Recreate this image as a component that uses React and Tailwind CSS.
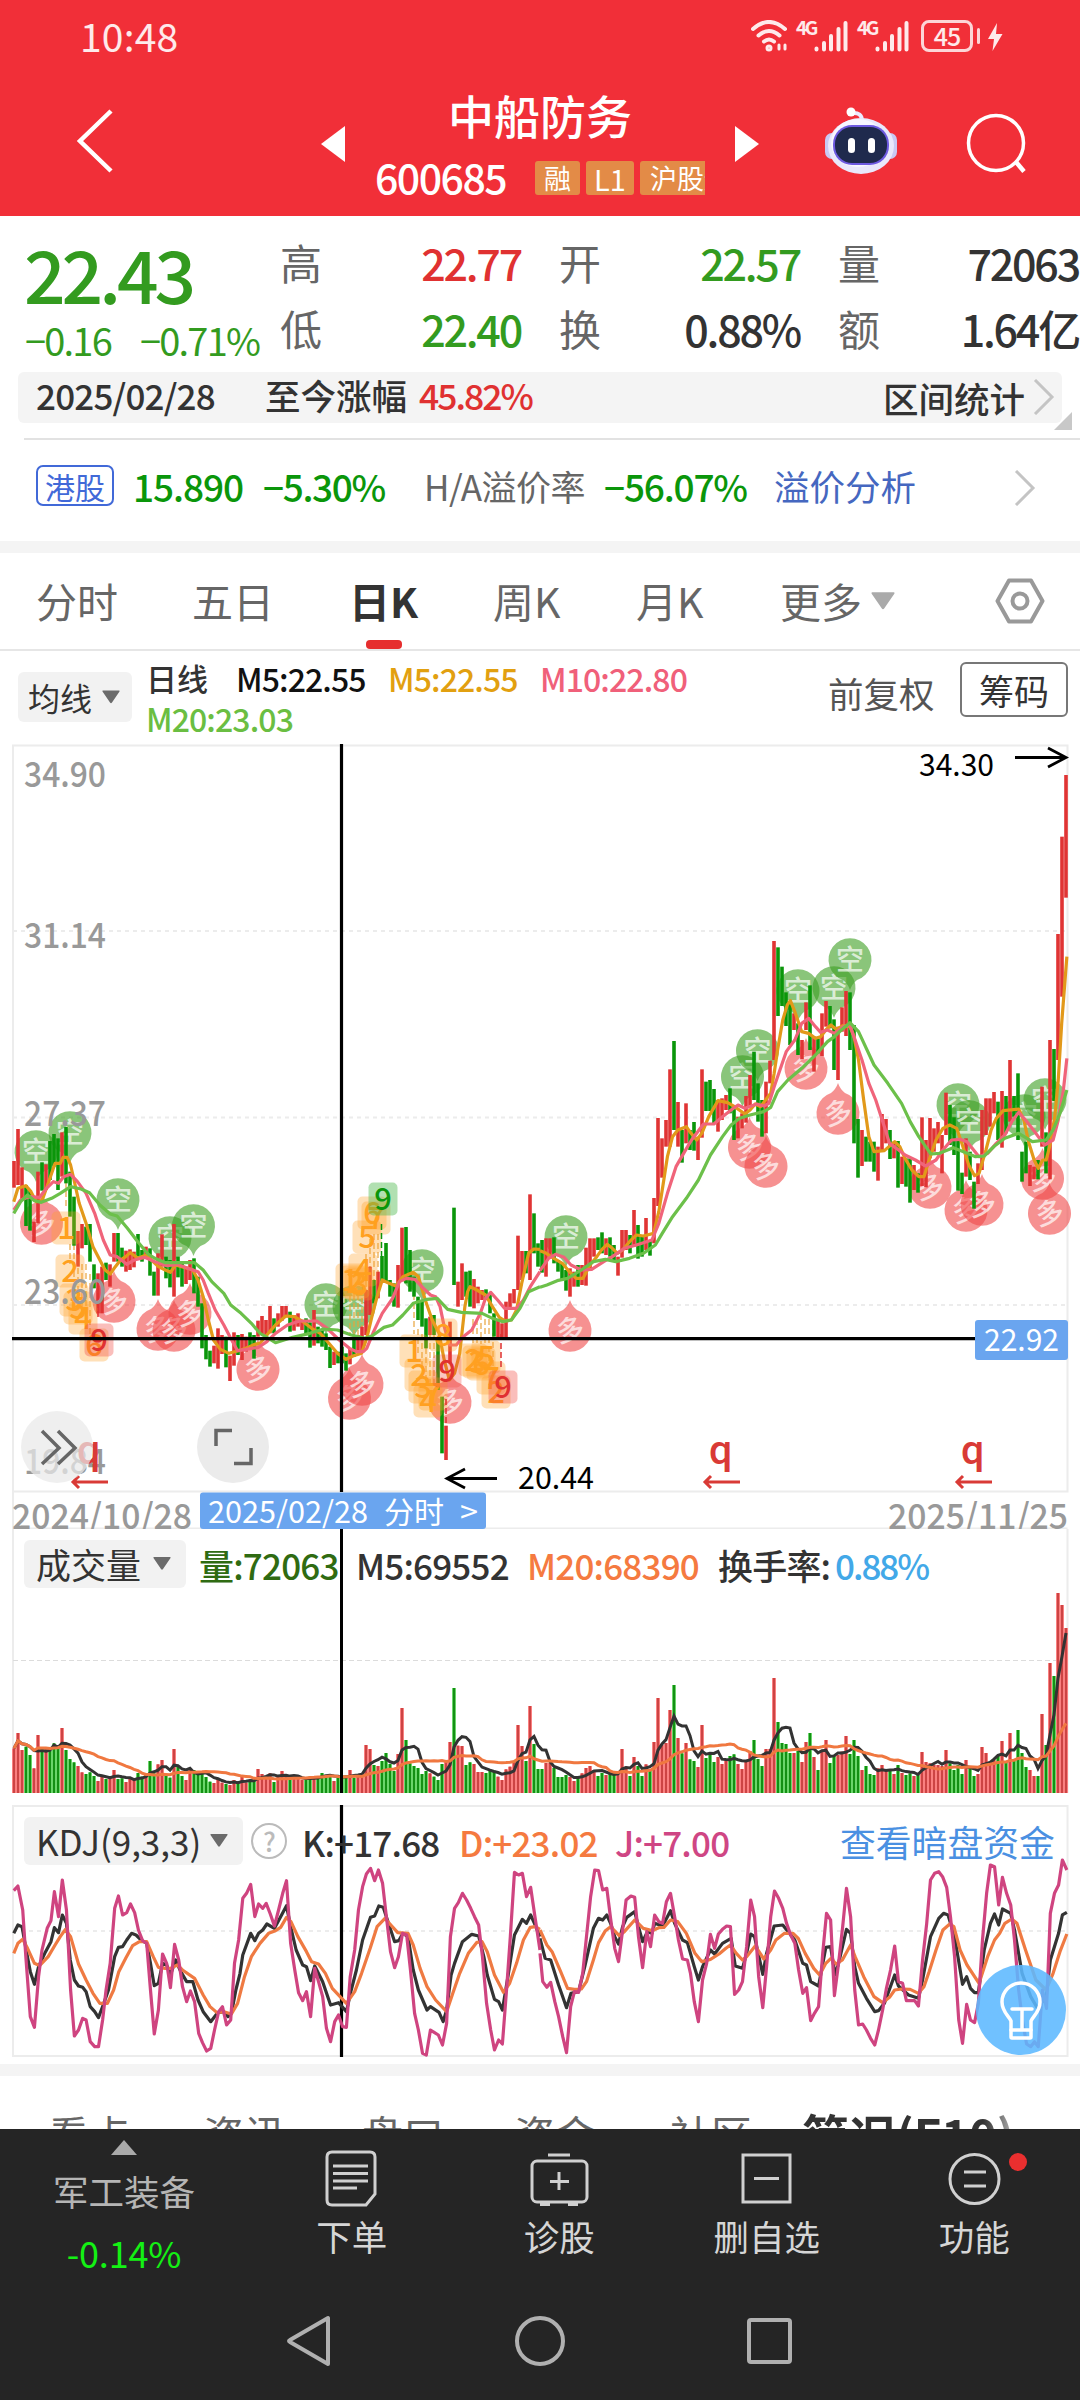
import React from "react";

const FONT = "font-['Noto_Sans_CJK_SC','Noto_Sans',sans-serif]";

const RED = "#e03434";
const GREEN = "#0a960a";

// direction, high and low of every daily bar, in chart units
const candles = `
r243,323 r147,315 r262,360 g315,438 g330,452 r425,486 r275,430 g247,332 r253,330 g183,300
g162,260 g175,330 r157,290 g141,310 g275,410 g350,497 r453,560 r432,505 g440,495 g432,545
g553,625 r580,700 r560,700 g548,600 r553,620 r459,545 g459,545 g503,560 r512,575 r508,570
r515,562 g462,530 g510,545 r500,535 g505,587 g575,647 r520,647 r463,560 g530,595 g540,622
r432,650 g530,592 g545,620 r560,612 r540,600 g535,640 g590,680 g670,805 g765,838 g812,860
r797,850 r745,866 r765,822 g770,862 r827,903 r757,857 g765,825 r762,840 r770,815 g757,800
g765,836 r722,770 r708,762 r720,770 r678,760 g715,760 r700,740 r678,722 r678,712 g695,755
r705,752 r700,740 r720,750 g715,765 g727,803 r690,797 g740,790 g750,800 g760,810 g800,864
r815,855 g815,850 g800,850 g820,872 r805,853 g780,830 r765,820 r740,810 r630,765 r560,705
g600,670 r575,655 g528,605 g489,605 g600,650 g610,680 r555,683 r443,600 g441,610 g510,635
g590,650 g650,720 g660,740 g715,805 r710,765 g705,765 g780,930 g950,1120 r1037,1140 r725,850
g383,615 r605,680 r550,660 g575,650 g572,680 r597,685 r620,670 r630,660 g628,660 g640,700
g700,770 r720,775 r730,780 r665,780 r640,690 r627,670 r467,630 r513,600 g513,580 r343,600
g400,520 g490,560 g480,578 r475,590 r475,530 g472,550 g540,575 g550,597 g570,632 r565,650
r575,620 g555,620 r555,615 r503,617 r475,570 r475,530 g472,510 g457,520 r475,525 g472,530
g495,540 r530,587 r450,533 r450,510 g465,520 r390,500 g435,536 g470,530 r414,510 g480,527
r354,490 r114,378 r175,293 r120,200 r-32,200 g-117,150 r66,200 g150,248 r70,190 g150,210
g126,212 r170,240 r-32,173 g5,93 g0,93 g27,130 r60,155 r55,120 r45,90 g25,100
g80,180 r110,175 r100,145 r48,128 r-15,80 g-85,60 g10,125 g60,170 r5,160 r-58,10
r-417,-60 g-398,-192 g-340,-222 g-263,-162 g-230,-105 r-200,-150 g-170,-75 r-120,-62 r-233,-150 g-284,-90
r-130,-25 g-125,-80 r-200,-72 r-237,-160 g-222,-155 g-182,-30 r-160,0 r-218,-145 r-267,-132 g-263,-90
g-165,190 g117,293 r150,258 g170,245 g185,245 g185,275 r200,302 r102,210 r117,190 g150,237
r185,235 g183,323 r230,312 g235,320 g235,368 r255,330 g280,338 r112,318 r180,322 r114,235
r145,215 r126,190 r165,280 r38,165 g75,195 g112,225 g180,332 g278,342 r175,290 g215,300
g305,386 r250,312 r90,270 r55,165 r55,140 r36,100 g65,180 r33,203 g48,160 r-60,125
g48,110 g-20,180 g215,305 g185,280 r255,318 r260,298 g240,298 r20,200 g157,280 r-120,298
g-93,63 r-438,-60 r-730,-250 r-915,-547`
  .trim()
  .split(/\s+/)
  .map((item) => {
    const [high, low] = item.slice(1).split(",").map(Number);
    return { up: item[0] === "r", high, low };
  });

const volumes = `
805 759 810 800 825 865 765 803 808 812 790 795 744 810 837 847 858 877 882 877 888 903 885 897 893 870
897 895 906 897 900 879 890 885 843 880 853 840 885 893 807 860 888 900 870 870 880 880 891 905 909 895
908 912 915 900 905 891 908 905 903 867 882 888 880 906 885 873 885 893 895 893 900 898 890 893 890 879
885 883 903 893 890 887 870 893 885 880 795 807 855 858 843 819 852 873 822 684 780 850 858 864 882 873
880 890 900 852 845 786 624 797 798 855 847 852 876 876 879 870 872 890 900 868 860 845 735 798 843 678
792 867 867 849 849 864 891 891 885 891 903 893 880 864 858 870 888 879 885 880 885 880 807 860 888 831
858 888 853 870 786 654 795 789 690 615 774 820 789 838 843 861 735 834 825 846 831 852 840 828 823 852
867 843 813 780 837 858 807 807 594 726 789 792 819 819 813 846 786 759 831 870 815 780 849 825 825 815
768 822 780 828 870 858 882 885 865 855 870 873 882 855 879 885 880 888 885 816 846 850 855 855 858 810
850 870 855 882 840 865 888 882 801 819 845 840 825 783 845 759 840 750 819 861 870 888 888 702 795 549
588 339 375 444`
  .trim()
  .split(/\s+/)
  .map(Number);

const barX = (i) => 14 + i * 4;

const average = (values, size) =>
  values
    .map((_, i) => {
      const part = values.slice(Math.max(0, i - size + 1), i + 1);
      const mean = part.reduce((a, b) => a + b, 0) / part.length;
      return `${barX(i)},${(mean / 3 - 49).toFixed(1)}`;
    })
    .join(" ");

// every line is stored as a left and a right half
const priceLines = [
  {
    color: "#e2991a",
    left: "40,365 52,325 75,317 90,335 105,365 122,362 140,310 160,250 175,250 183,232 195,232 205,255 215,300 230,370 250,430 270,500 290,540 305,570 320,582 335,560 350,540 365,530 378,518 392,528 400,535 425,525 440,540 460,560 480,570 495,577 510,555 535,562 560,570 575,600 590,650 605,720 620,780 640,808 665,820 700,810 725,800 740,793 755,790 775,765 800,735 830,708 855,710 880,725 905,745 930,760 955,790 980,820 1005,838 1025,828 1050,820 1065,775 1080,710 1095,650 1110,600 1130,610 1150,618 1170,590 1200,577 1215,590 1235,660 1255,720 1275,760 1290,840 1305,900 1320,880 1335,820 1350,680 1358,635 1365,620 1385,630 1410,645 1430,680 1450,712 1465,722 1485,720 1500,690 1515,610 1535,520 1550,507 1568,508",
    right: "0,512 15,518 40,535 65,550 85,575 105,595 125,595 145,555 165,530 180,508 195,493 210,505 225,520 240,510 260,485 280,465 300,468 330,460 345,395 355,330 370,230 385,170 400,150 425,140 435,155 455,180 470,160 490,110 517,62 545,68 565,80 595,102 610,90 625,72 640,80 655,60 670,40 680,-20 690,-90 705,-180 718,-225 727,-238 740,-205 760,-145 780,-140 800,-125 815,-130 830,-150 845,-165 860,-152 880,-163 900,-160 912,-130 925,-60 940,60 955,170 970,215 1000,212 1030,185 1045,200 1060,235 1080,270 1100,290 1115,290 1130,240 1150,180 1170,145 1190,135 1210,145 1225,190 1245,255 1262,287 1275,280 1295,210 1310,150 1325,115 1345,92 1390,87 1405,120 1420,190 1435,240 1447,265 1460,240 1470,240 1480,200 1495,110 1505,0 1515,-170 1530,-370",
  },
  {
    color: "#f0647a",
    left: "40,390 60,360 85,350 115,352 135,325 155,305 170,310 185,290 205,283 225,305 250,340 275,400 300,480 320,525 340,530 368,553 390,540 420,532 450,545 485,557 515,553 545,565 575,575 590,600 605,640 625,690 650,735 670,775 690,812 715,808 750,802 775,785 800,760 835,735 870,723 920,723 950,745 985,780 1015,805 1035,815 1055,815 1065,805 1085,755 1110,700 1140,655 1160,605 1180,595 1205,598 1230,625 1250,645 1265,650 1278,680 1290,740 1305,795 1325,795 1345,770 1370,750 1395,700 1410,655 1425,637 1445,660 1465,685 1500,685 1520,660 1540,620 1568,575",
    right: "0,572 25,535 45,523 70,532 90,555 120,570 150,568 185,545 210,530 245,505 280,495 325,480 345,430 370,340 395,260 420,215 440,180 475,132 505,132 530,110 555,90 575,75 595,85 630,72 650,78 665,70 680,20 700,-40 715,-85 740,-120 760,-170 780,-185 800,-160 815,-143 835,-150 855,-140 880,-160 900,-165 915,-120 935,-60 955,10 975,60 1000,140 1015,190 1035,205 1060,225 1090,240 1120,258 1150,240 1170,210 1195,180 1220,178 1240,185 1275,230 1300,220 1325,190 1350,165 1370,125 1390,97 1410,120 1440,160 1465,195 1490,180 1505,120 1520,30 1530,-65",
  },
  {
    color: "#6cc04a",
    left: "40,400 60,365 80,345 100,362 120,367 150,355 175,340 205,320 235,327 260,338 290,375 320,402 340,408 370,445 400,485 430,522 450,535 480,548 520,548 565,548 590,570 615,605 650,640 670,675 700,700 730,730 755,760 780,775 800,788 825,780 850,772 900,760 940,747 980,750 1020,765 1060,775 1080,768 1115,742 1140,735 1170,705 1200,670 1240,658 1270,655 1300,688 1340,697 1400,700 1430,715 1460,725 1485,720 1510,685 1535,635 1568,620",
    right: "0,622 20,615 50,602 80,595 120,570 155,545 190,538 220,545 260,535 300,520 335,495 355,460 385,410 425,355 460,300 495,225 530,170 555,135 580,115 610,105 650,95 670,82 690,35 720,0 760,-35 800,-75 835,-115 855,-130 875,-150 900,-172 925,-145 970,-45 1010,10 1050,70 1075,125 1100,170 1120,200 1135,222 1160,220 1200,203 1230,215 1265,230 1290,228 1320,198 1350,175 1390,160 1430,185 1470,180 1490,150 1510,100 1530,30",
  },
];

const kdjLines = [
  {
    color: "#333333",
    left: "40,430 52,405 64,410 76,480 88,545 100,583 112,530 130,490 148,455 158,413 170,428 181,375 193,400 204,510 216,570 228,588 240,592 250,605 262,650 275,665 286,683 298,650 315,600 333,500 344,472 356,470 368,450 382,430 395,435 410,450 426,460 437,520 448,587 460,580 472,520 484,525 495,555 510,510 525,545 542,575 560,575 575,630 590,665 612,695 632,668 650,665 662,680 672,670 685,600 697,550 705,495 728,430 740,452 751,430 763,420 775,402 797,415 810,390 832,347 844,410 860,480 879,525 890,530 902,572 914,528 937,575 960,645 983,638 1006,665 1020,600 1035,540 1053,450 1076,382 1088,378 1100,348 1113,352 1125,390 1146,455 1158,452 1170,430 1185,440 1200,540 1215,600 1240,660 1250,650 1275,667 1287,695 1297,660 1310,555 1320,520 1343,455 1370,433 1390,438 1405,500 1415,555 1436,628 1448,635 1459,660 1475,560 1494,435 1517,388 1529,400 1541,375 1552,400 1568,440",
    right: "0,445 15,505 31,510 54,585 66,620 77,653 90,610 112,605 130,530 155,415 170,385 182,390 194,375 205,400 217,440 228,462 240,410 252,382 275,365 286,410 298,455 312,425 325,430 333,400 356,408 379,362 391,400 414,450 428,458 448,530 460,570 472,530 495,480 507,492 530,460 555,445 567,528 588,535 600,490 612,432 623,440 647,553 658,490 680,408 705,405 728,435 740,450 763,520 774,525 786,575 809,588 830,472 844,470 857,555 867,520 890,418 902,430 914,530 925,580 948,625 972,665 983,662 1000,640 1030,555 1041,588 1070,615 1099,625 1111,570 1134,440 1158,385 1172,370 1185,375 1204,440 1227,583 1239,560 1250,595 1262,608 1273,608 1290,480 1308,400 1320,372 1332,405 1343,357 1367,370 1378,420 1400,550 1425,620 1445,655 1470,620 1482,510 1506,430 1517,375 1530,367",
  },
  {
    color: "#ef7a42",
    left: "40,490 52,460 66,448 80,475 100,520 115,527 140,500 160,465 175,440 190,418 205,440 228,522 250,570 270,610 290,640 312,640 330,600 345,545 365,505 385,467 405,455 426,455 445,500 460,532 480,535 495,535 515,525 530,540 565,565 590,615 610,650 630,668 650,665 672,672 690,640 710,560 730,500 755,460 780,430 800,422 815,412 832,382 845,395 865,440 890,485 905,515 925,522 945,550 965,595 1006,640 1030,605 1050,550 1075,475 1095,410 1118,385 1135,405 1155,428 1185,430 1200,465 1220,535 1240,590 1265,630 1297,665 1315,610 1335,550 1360,490 1385,457 1400,455 1415,485 1436,555 1462,607 1480,580 1500,520 1520,450 1540,412 1555,410 1568,418",
    right: "0,420 20,465 35,485 60,545 80,595 100,598 120,597 135,575 155,510 170,458 190,422 205,410 230,437 245,425 275,390 300,415 325,422 345,413 360,412 379,390 400,395 425,430 450,490 470,515 495,508 520,492 540,475 553,465 570,490 588,510 600,500 625,468 650,507 670,480 685,450 710,430 735,430 750,445 770,490 795,535 812,555 830,520 845,505 860,522 878,510 902,465 915,500 940,560 970,620 995,638 1015,622 1030,600 1050,597 1075,598 1099,610 1115,590 1130,545 1150,480 1170,420 1190,402 1202,410 1220,480 1240,525 1275,580 1300,500 1320,450 1335,430 1350,400 1370,387 1385,400 1410,480 1440,570 1470,600 1490,550 1510,485 1530,432",
  },
  {
    color: "#cf4480",
    left: "40,302 52,288 66,360 75,500 88,680 100,712 112,560 122,480 137,415 148,392 158,305 170,380 181,270 193,360 205,600 216,738 228,720 240,685 250,690 262,755 275,770 286,770 298,690 308,600 320,520 333,355 344,318 356,375 368,368 379,342 391,368 402,420 414,452 426,460 437,600 448,732 460,660 472,492 484,520 495,593 507,463 519,510 530,590 542,635 553,603 565,635 577,730 588,758 600,783 612,775 623,720 635,665 646,650 658,705 670,690 681,520 693,450 705,325 716,310 728,283 740,380 751,342 763,355 773,340 785,372 797,408 809,360 821,310 832,272 844,460 856,540 867,608 879,632 890,605 902,680 914,535 925,575 937,620 948,715 960,755 972,695 983,675 995,710 1006,712 1017,560 1030,480 1041,360 1053,290 1064,252 1076,235 1088,272 1099,240 1111,280 1122,380 1134,485 1146,533 1157,500 1169,430 1181,435 1192,540 1204,670 1215,720 1227,790 1238,795 1250,720 1262,728 1273,735 1285,765 1297,700 1308,440 1320,355 1331,338 1343,310 1355,330 1367,355 1378,380 1390,405 1401,500 1413,640 1425,720 1436,780 1448,750 1459,762 1471,600 1482,440 1494,247 1506,255 1517,250 1529,320 1541,292 1552,370 1568,480",
    right: "0,490 8,575 20,592 31,577 43,635 54,680 66,740 77,788 89,650 100,605 112,607 124,550 135,440 147,320 159,240 170,242 182,300 194,295 205,385 217,475 228,515 240,420 250,330 264,318 275,322 286,440 298,533 310,425 321,470 333,375 345,395 356,400 367,335 379,310 391,380 402,450 414,507 428,510 437,550 448,635 460,695 472,570 484,520 495,433 507,475 518,432 530,418 542,408 553,410 565,613 577,600 588,575 600,470 612,330 623,380 635,560 647,653 658,530 670,380 681,303 693,325 705,355 716,400 728,435 740,460 751,540 763,610 774,593 786,692 797,670 809,650 821,490 832,370 844,390 855,617 867,520 879,410 890,295 902,380 914,600 925,705 937,702 948,720 960,745 972,765 983,720 995,660 1006,595 1018,540 1030,468 1041,575 1053,580 1064,632 1088,632 1099,648 1111,510 1123,400 1134,270 1146,250 1158,245 1169,260 1181,292 1192,380 1204,500 1216,690 1227,760 1239,643 1250,690 1262,698 1273,640 1285,450 1297,310 1308,225 1320,230 1332,345 1343,262 1355,310 1367,345 1378,450 1390,600 1401,690 1413,762 1425,770 1436,755 1447,770 1459,600 1471,655 1482,370 1494,310 1506,285 1517,210 1530,240",
  },
];

const shortPins = [
  [36, 408], [70, 389], [118, 456], [170, 494], [193.5, 482], [326, 561], [354, 563], [422, 527],
  [566, 493], [742.5, 333], [757.5, 307], [798, 247], [834, 244], [850, 216], [958, 361], [969, 378], [1024, 372], [1045, 356],
];

const longPins = [
  [41.5, 479], [114, 557], [158, 585], [174, 586], [190, 569], [258, 625], [349.5, 654], [362, 640], [450, 658],
  [570, 586], [749.5, 403], [766, 422], [806, 324], [838, 369], [930, 443], [966, 466], [982, 460], [1042.5, 434], [1049.5, 469],
];

// nine-turn counters: x, y, digit
const counters = [
  [66, 484, "1"], [70, 527, "2"], [74, 556, "3"], [78, 564, "5"], [83, 574, "4"], [94, 601, "6"],
  [350, 536, "1"], [355, 538, "2"], [359, 540, "3"], [363, 526, "4"], [367, 493, "5"], [372, 469, "6"], [376, 474, "7"],
  [414, 607, "1"], [419, 631, "2"], [423, 643, "3"], [428, 657, "4"], [433, 650, "7"], [443, 591, "8"],
  [473, 616, "2"], [477, 618, "3"], [481, 620, "6"], [486, 613, "5"], [491, 634, "7"], [496, 648, "2"],
];

const HalfLines = ({ lines, offset, width }) =>
  lines.map(({ color, left, right }) => (
    <g key={color} fill="none" stroke={color} strokeWidth={width} strokeLinejoin="round">
      <polyline
        points={left}
        transform={`translate(0 ${offset}) scale(0.34435 0.33333)`}
        vectorEffect="non-scaling-stroke"
      />
      <polyline
        points={right}
        transform={`translate(540 ${offset}) scale(0.34435 0.33333)`}
        vectorEffect="non-scaling-stroke"
      />
    </g>
  ));

const Label = ({ x, y, w, size, fill, weight = 400, children }) => (
  <text x={x} y={y} textLength={w} lengthAdjust="spacingAndGlyphs" fontSize={size} fontWeight={weight} fill={fill}>
    {children}
  </text>
);

const Chevron = ({ className }) => (
  <svg viewBox="0 0 22 36" className={className} fill="none" stroke="#c4c4c4" strokeWidth="3">
    <path d="M2 1 L19 18 L2 35" />
  </svg>
);

const Caret = ({ className, fill = "#6b6b6b" }) => (
  <svg viewBox="0 0 18 13" className={className}>
    <path d="M1 0 H17 Q18 0 17.5 1 L10 12 Q9 13.5 8 12 L.5 1 Q0 0 1 0Z" fill={fill} />
  </svg>
);

const Signal = () => (
  <div className="flex h-8">
    <span className="w-[18px] text-[19px] leading-[14px] font-bold tracking-[-2.5px]">4G</span>
    <svg viewBox="0 0 34 32" className="h-8 w-[34px]" stroke="#fff" strokeOpacity=".9" strokeWidth="4" strokeLinecap="round">
      <path d="M2.500 28.500V29.500M10 23V29.500M17 16V29.500M24.500 9V29.500M31.500 3V29.500" />
    </svg>
  </div>
);

const StatusBar = () => (
  <div className="flex h-[72px] items-start text-white/90">
    <span className="mt-[9px] ml-[80px] w-[671px] text-[39px] leading-[52px] tracking-[0.2px]">10:48</span>
    <svg viewBox="0 0 38 32" className="mt-5 h-8 w-[38px]" fill="none" stroke="currentColor" strokeWidth="4" strokeLinecap="round">
      <path d="M2 9 Q18 -5 34 9M7.500 15.500 Q18 6.500 28.500 15.500M13 21.500 Q18 17.500 23 21.500" />
      <circle cx="18" cy="28" r="1.500" />
      <path d="M28 25 V29 M34 25 V29" strokeWidth="3" />
    </svg>
    <div className="mt-5 ml-[7px] flex gap-[9px]">
      <Signal />
      <Signal />
    </div>
    <div className="mt-5 ml-3 flex h-8 w-[52px] items-center justify-center rounded-[8px] border-[3px] border-white/80 pb-px text-[25px] leading-none font-medium tracking-[-1px]">
      45
    </div>
    <div className="mt-7 ml-1 h-4 w-[3px] rounded bg-white/80" />
    <svg viewBox="0 0 16 28" className="mt-[23px] ml-[7px] h-7 w-4" fill="currentColor">
      <path d="M10 0 L1 16 H7 L5.500 28 L15.500 11 H9Z" />
    </svg>
  </div>
);

const Robot = () => (
  <svg viewBox="0 0 74 68" className="mt-[35px] ml-[65px] h-[68px] w-[74px]">
    <path d="M38 14 Q38 5 28 6" stroke="#eceaff" strokeWidth="4" fill="none" />
    <circle cx="27" cy="5" r="4.500" fill="#fff" />
    <rect x="1" y="26" width="14" height="26" rx="7" fill="#c9c9f3" />
    <rect x="59" y="26" width="14" height="26" rx="7" fill="#c9c9f3" />
    <ellipse cx="37" cy="39" rx="33" ry="28" fill="#e9e8fb" />
    <ellipse cx="34" cy="36" rx="27" ry="24" fill="#f7f7ff" />
    <rect x="9" y="18" width="56" height="40" rx="19" fill="#6d5ae0" />
    <rect x="11" y="20" width="52" height="36" rx="17" fill="#1f2a4d" />
    <rect x="24" y="31" width="7" height="15" rx="3.500" fill="#fff" />
    <rect x="44" y="31" width="7" height="15" rx="3.500" fill="#fff" />
  </svg>
);

const Header = () => (
  <header className="h-[216px] bg-[#f12f38]">
    <StatusBar />
    <div className="flex text-white">
      <svg viewBox="0 0 38 66" className="mt-9 ml-[76px] h-[66px] w-[38px]" fill="none" stroke="#fff" strokeWidth="4.500">
        <path d="M35 3 L4 33 L35 63" />
      </svg>
      <svg viewBox="0 0 24 36" className="mt-[54px] ml-[207px] h-9 w-6" fill="#fff">
        <path d="M24 0 V36 L0 18Z" />
      </svg>
      <div className="flex w-[390px] flex-col items-center">
        <h1 className="mt-[8px] text-[46px] leading-[68px] font-medium">中船防务</h1>
        <div className="mt-[11px] flex h-[38px] w-[360px] items-center self-start overflow-hidden pl-[30px]">
          <span className="w-[130px] shrink-0 pb-1 text-[41px] leading-[38px] font-medium tracking-[-1.5px]">600685</span>
          <div className="ml-[30px] flex shrink-0 gap-[6px] text-[27px] leading-[34px]">
            <span className="h-[34px] w-[45px] rounded-[3px] bg-[#e38b47] text-center">融</span>
            <span className="h-[34px] w-[48px] rounded-[3px] bg-[#e38b47] text-center text-[29px]">L1</span>
            <span className="h-[34px] w-[100px] rounded-[3px] bg-[#e38b47] pl-[10px]">沪股通</span>
          </div>
        </div>
      </div>
      <svg viewBox="0 0 24 36" className="mt-[54px] h-9 w-6" fill="#fff">
        <path d="M0 0 V36 L24 18Z" />
      </svg>
      <Robot />
      <svg viewBox="0 0 62 62" className="mt-[41px] ml-[67px] h-[62px] w-[62px]" fill="none" stroke="#fff" strokeWidth="3.500">
        <circle cx="31" cy="30" r="27.500" />
        <path d="M51 49 L59 58.500" strokeWidth="4.500" />
      </svg>
    </div>
  </header>
);

const stats = [
  [["高", "22.77", "text-[#e03131]"], ["开", "22.57", "text-[#339b1f]"], ["量", "72063", "text-[#333]"]],
  [["低", "22.40", "text-[#339b1f]"], ["换", "0.88%", "text-[#333]"], ["额", "1.64亿", "text-[#333]"]],
];

const Quote = () => (
  <section className="flex h-[156px]">
    <div className="w-[280px] shrink-0 pl-[24px] whitespace-nowrap text-[#339b1f]">
      <div className="mt-[20px] text-[73px] leading-[72px] font-medium tracking-[-4px]">22.43</div>
      <div className="mt-[13px] flex pl-px text-[38px] leading-[37px] tracking-[-1.8px]">
        <span className="w-[115px]">−0.16</span>
        <span>−0.71%</span>
      </div>
    </div>
    <div className="w-[800px] pt-[13px]">
      {stats.map((row) => (
        <div key={row[0][0]} className="flex h-[66px] items-center gap-[38px]">
          {row.map(([name, value, color]) => (
            <div key={name} className="flex w-[241px] shrink-0 items-center justify-between whitespace-nowrap">
              <span className="text-[42px] leading-[60px] text-[#666]">{name}</span>
              <span className={`text-[43px] leading-[60px] font-medium tracking-[-2.2px] ${color}`}>{value}</span>
            </div>
          ))}
        </div>
      ))}
    </div>
  </section>
);

const RangeBar = () => (
  <div className="relative mx-[18px] flex h-[51px] items-center rounded-md bg-[#f4f4f4] pb-[6px] text-[35.500px] leading-[45px] whitespace-nowrap text-[#333]">
    <span className="ml-[18px] w-[229px] text-[35px] font-medium tracking-[-0.8px]">2025/02/28</span>
    <span className="w-[154px] font-medium">至今涨幅</span>
    <span className="w-[464px] font-medium tracking-[-2px] text-[#e03131]">45.82%</span>
    <span className="mt-[6px] w-[150px] font-medium">区间统计</span>
    <Chevron className="mt-1 h-9 w-[22px]" />
    <svg viewBox="0 0 18 18" className="absolute top-[40px] left-[1036px] h-[18px] w-[18px]">
      <path d="M18 0 V18 H0Z" fill="#c8c8c8" />
    </svg>
  </div>
);

const HkRow = () => (
  <div className="mt-[15px] ml-6 flex h-[103px] items-center border-t-2 border-[#e2e2e2] pb-[10px] text-[37px] leading-[50px] whitespace-nowrap text-[#0a960a]">
    <span className="ml-3 flex h-[41px] w-[78px] items-center justify-center rounded-[7px] border-2 border-[#4169d8] text-[30px] leading-none text-[#4169d8]">
      港股
    </span>
    <span className="ml-[19px] w-[130px] font-medium tracking-[-1.1px]">15.890</span>
    <span className="w-[161px] font-medium tracking-[-1.4px]">−5.30%</span>
    <span className="w-[180px] text-[35px] tracking-[-0.5px] text-[#666]">H/A溢价率</span>
    <span className="w-[170px] font-medium tracking-[-1.2px]">−56.07%</span>
    <span className="w-[240px] text-[35.500px] text-[#4567c0]">溢价分析</span>
    <Chevron className="mt-1 h-9 w-[22px]" />
  </div>
);

const PeriodTabs = () => (
  <nav className="flex h-[98px] items-start border-b-2 border-[#e6e6e6] text-[41px] leading-[95px] whitespace-nowrap text-[#666]">
    <span className="ml-9 w-[156px]">分时</span>
    <span className="w-[157px]">五日</span>
    <div className="flex w-[144px] flex-col">
      <span className="h-[87px] font-bold text-[#333]">日K</span>
      <span className="ml-[17px] h-[9px] w-9 rounded-[4px] bg-[#e62e2e]" />
    </div>
    <span className="w-[143px]">周K</span>
    <span className="w-[144px]">月K</span>
    <span className="w-[91px]">更多</span>
    <Caret className="mt-[39px] h-[18px] w-6" fill="#aaa" />
    <svg viewBox="0 0 50 46" className="mt-[25px] ml-[100px] h-[46px] w-[50px]" fill="none" stroke="#999" strokeWidth="4">
      <path d="M14 2.500 H36 L47.500 23 L36 43.500 H14 L2.500 23Z" strokeLinejoin="round" />
      <circle cx="25" cy="23" r="7.500" />
    </svg>
  </nav>
);

const AverageRow = () => (
  <div className="flex h-[93px] items-start whitespace-nowrap">
    <div className="mt-[21px] ml-[18px] flex h-[50px] w-[114px] items-center rounded-md bg-[#f2f2f2] pb-px pl-[10px] text-[32px] leading-none text-[#333]">
      <span className="w-[74px]">均线</span>
      <Caret className="h-[14px] w-[18px]" />
    </div>
    <div className="mt-[7px] ml-[14px] w-[682px] text-[32px] leading-[40px] font-medium tracking-[-0.9px]">
      <div className="flex">
        <span className="w-[90px] text-[31px] tracking-normal text-[#333]">日线</span>
        <span className="w-[152px] text-[#111]">M5:22.55</span>
        <span className="w-[152px] text-[#e2a010]">M5:22.55</span>
        <span className="text-[#f0607a]">M10:22.80</span>
      </div>
      <div className="text-[#6abe42]">M20:23.03</div>
    </div>
    <span className="mt-[17px] w-[132px] text-[35.500px] leading-[50px] text-[#555]">前复权</span>
    <div className="mt-[11px] flex h-[55px] w-[108px] items-center justify-center rounded-md border-2 border-[#777] text-[35px] leading-none text-[#333]">
      筹码
    </div>
  </div>
);

const Pin = ({ x, y, color, up, children }) => (
  <g transform={`translate(${x} ${y})`}>
    <path
      d="M-7 20 Q-2 24 0 30 Q2 24 7 20 A21.500 21.500 0 1 0 -7 20Z"
      fill={color}
      fillOpacity=".6"
      transform={up ? "rotate(180)" : undefined}
    />
    <text
      textAnchor="middle"
      y="10"
      fontSize="28"
      fontWeight="500"
      fill="#fff"
      fillOpacity=".7"
      transform={up ? "rotate(-12)" : undefined}
    >
      {children}
    </text>
  </g>
);

const Counter = ({ x, y, bg, color, size = 29, children }) => (
  <g>
    <rect x={x - size / 2} y={y - size / 2 - 2} width={size} height={size + 4} rx="5" fill={bg} />
    <text x={x} y={y + 11} textAnchor="middle" fontSize="31" fontWeight="500" fill={color}>
      {children}
    </text>
  </g>
);

const QMark = ({ x }) => (
  <g fill="none" stroke="#d93a36" strokeWidth="3">
    <text x={x + 7} y="720" fontSize="41" fontFamily="Roboto" fontWeight="500" fill="#d93a36" stroke="none">
      q
    </text>
    <path d={`M${x + 38} 738 H${x + 3} M${x + 9} 732 L${x + 3} 738 L${x + 9} 744`} />
  </g>
);

const PriceChart = () => (
  <section className="h-[785px]">
    <svg viewBox="0 0 1080 785" className="block h-[785px] w-[1080px] overflow-hidden">
      <path d="M13 785 V1.500 H1067.500 V747.500 H13" fill="none" stroke="#ececec" strokeWidth="2" />
      <path d="M13 187H1066M13 373.500H1066M13 561H1066" stroke="#ececec" strokeWidth="2" strokeDasharray="4 4" />
      {shortPins.map(([x, y]) => (
        <Pin key={x} x={x} y={y} color="#3c9f22">空</Pin>
      ))}
      {longPins.map(([x, y]) => (
        <Pin key={x} x={x} y={y} color="#f04848" up>多</Pin>
      ))}
      <path
        d="M66 420V465M70 500V520M74 500V535M78 515V560M82 520V570M86 520V580M90 530V590M350 552V590M354 550V595M358 550V595M362 545V590M366 510V570M370 495V550M374 490V540M378 490V530M414 550V590M418 585V610M422 590V625M426 595V640M430 590V640M434 590V640M473 575V600M477 575V600M481 570V600M485 575V600M489 575V620M493 580V630"
        stroke="#e8a33c"
        strokeWidth="1.200"
        strokeDasharray="6 3"
      />
      {candles.map(({ up, high, low }, i) => (
        <rect key={i} x={barX(i) - 1.8} y={336 + high / 3} width="3.600" height={(low - high) / 3} fill={up ? RED : GREEN} />
      ))}
      <HalfLines lines={priceLines} offset={336} width={3.2} />
      {counters.map(([x, y, digit]) => (
        <Counter key={x} x={x} y={y} bg="rgba(255,160,40,.33)" color="#ffa01e">
          {digit}
        </Counter>
      ))}
      <Counter x={99} y={596} bg="rgba(240,70,60,.35)" color="#e03131">9</Counter>
      <Counter x={383} y={455} bg="rgba(70,180,70,.42)" color="#0a960a">9</Counter>
      <Counter x={447} y={627} bg="rgba(240,70,60,.3)" color="#e03131">9</Counter>
      <Counter x={503} y={643} bg="rgba(240,70,60,.35)" color="#e03131">9</Counter>
      <path d="M98 540V575M501 590V625M446 655V690" stroke="#e03131" strokeWidth="1.500" strokeDasharray="6 3" />
      <path d="M381.500 480V512" stroke={GREEN} strokeWidth="1.500" strokeDasharray="6 3" />

      <Label x={24} y={43} w={82} size={35} fill="#999" weight={500}>34.90</Label>
      <Label x={24} y={204} w={82} size={35} fill="#999" weight={500}>31.14</Label>
      <Label x={24} y={382} w={82} size={35} fill="#999" weight={500}>27.37</Label>
      <Label x={24} y={560} w={82} size={35} fill="#999" weight={500}>23.60</Label>
      <Label x={24} y={730} w={82} size={35} fill="#999" weight={500}>19.84</Label>
      <QMark x={70} />
      <QMark x={702} />
      <QMark x={954} />

      <circle cx="57" cy="703" r="36" fill="#e9e9e9" fillOpacity=".72" />
      <path d="M42 687 L59 704 L42 720M58 687 L75 704 L58 720" fill="none" stroke="#666" strokeWidth="3.500" />
      <circle cx="233" cy="703" r="36" fill="#ebebeb" />
      <path d="M216 702 V686.500 H232M251 704 V719.500 H234" fill="none" stroke="#666" strokeWidth="3.500" />

      <g fill="none" stroke="#000" strokeWidth="2.800">
        <path d="M1015 13.500 H1065M1048 4 L1066 13.500 L1048 23" />
        <path d="M497 734.500 H447M465 725 L447 734.500 L465 744" />
      </g>
      <Label x={919} y={32} w={75} size={31} fill="#000">34.30</Label>
      <Label x={518} y={745} w={76} size={31} fill="#000">20.44</Label>

      <path d="M341.500 0V748M12 594.700H975" stroke="#000" strokeWidth="3.200" />
      <rect x="975" y="576" width="93" height="40" rx="3" fill="#6aa5ef" />
      <Label x={984} y={607} w={75} size={31} fill="#fff">22.92</Label>

      <path d="M13 784.500 H1067.500" stroke="#ececec" strokeWidth="2" />
      <Label x={12} y={785} w={180} size={35.5} fill="#999" weight={500}>2024/10/28</Label>
      <Label x={888} y={785} w={180} size={35.5} fill="#999" weight={500}>2025/11/25</Label>
      <rect x="200" y="748.500" width="286" height="36.500" rx="3" fill="#6aa5ef" />
      <Label x={208} y={779} w={160} size={30} fill="#fff">2025/02/28</Label>
      <Label x={384} y={779} w={60} size={30} fill="#fff">分时</Label>
      <Label x={460} y={779} w={18} size={30} fill="#fff">&gt;</Label>
    </svg>
  </section>
);

const VolumeChart = () => (
  <section className="relative h-[276px]">
    <svg viewBox="0 0 1080 276" className="absolute inset-0 h-[276px] w-[1080px]">
      <path d="M13 264V0M1067.500 264V0" stroke="#ececec" strokeWidth="2" />
      <path d="M13 131.500H1066" stroke="#dcdcdc" strokeWidth="1" strokeDasharray="5 3" />
      {volumes.map((top, i) => {
        const y = top / 3 - 49;
        return (
          <g key={i}>
            <rect x={barX(i) - 2} y={y} width="4" height={264 - y} fill={candles[i].up ? "#fa8080" : "#6bd66b"} />
            <rect x={barX(i) - 1} y={y} width="2" height={264 - y} fill={candles[i].up ? "#cc4444" : "#149014"} />
          </g>
        );
      })}
      <polyline points={average(volumes, 5)} fill="none" stroke="#333" strokeWidth="3" />
      <polyline points={average(volumes, 20)} fill="none" stroke="#f07840" strokeWidth="3" />
    </svg>
    <div className="relative flex items-center pt-[11px] pl-6 text-[35px] leading-[47px] font-medium tracking-[-0.8px] whitespace-nowrap text-[#333]">
      <div className="flex h-12 w-[162px] items-center rounded-md bg-[#f2f2f2] pb-0.5 pl-[12px] font-normal tracking-normal">
        <span className="w-[117px]">成交量</span>
        <Caret className="h-[13px] w-[18px]" />
      </div>
      <span className="ml-[13px] w-[157px] text-[#2f6b12]">量:72063</span>
      <span className="w-[171px]">M5:69552</span>
      <span className="w-[191px] text-[#f57a40]">M20:68390</span>
      <span className="w-[117px]">换手率:</span>
      <span className="tracking-[-2px] text-[#42a8e8]">0.88%</span>
    </div>
    <svg viewBox="0 0 4 264" className="absolute top-0 left-[340px] h-[264px] w-1">
      <path d="M1.500 0V264" stroke="#000" strokeWidth="3" />
    </svg>
  </section>
);

const KdjChart = () => (
  <section className="relative h-[259px]">
    <svg viewBox="0 0 1080 259" className="absolute inset-0 h-[259px] w-[1080px]">
      <rect x="13" y="1" width="1054.500" height="250" fill="none" stroke="#ececec" strokeWidth="2" />
      <path d="M13 126H1066" stroke="#ececec" strokeWidth="2" strokeDasharray="4 4" />
      <path d="M341.500 0V252" stroke="#000" strokeWidth="3.200" />
      <HalfLines lines={kdjLines} offset={-15} width={3.2} />
    </svg>
    <div className="relative flex items-center pt-3 pl-6 text-[35px] leading-[47px] font-medium tracking-[-0.8px] whitespace-nowrap text-[#333]">
      <div className="flex h-12 w-[219px] items-center rounded-md bg-[#f2f2f2] pb-0.5 pl-[12px]">
        <span className="w-[174px] font-normal tracking-normal">KDJ(9,3,3)</span>
        <Caret className="h-[13px] w-[18px]" />
      </div>
      <span className="ml-2 flex h-[36px] w-[36px] items-center justify-center rounded-full border-[2.500px] border-[#bbb] text-[26px] leading-none text-[#bbb]">
        ?
      </span>
      <span className="ml-[15px] w-[157px]">K:+17.68</span>
      <span className="w-[156px] text-[#f57a40]">D:+23.02</span>
      <span className="w-[225px] text-[#cf4684]">J:+7.00</span>
      <span className="text-[35.800px] font-normal tracking-normal text-[#4a90e2]">查看暗盘资金</span>
    </div>
    <svg viewBox="0 0 92 92" className="absolute top-[159px] left-[975px] h-[92px] w-[92px]">
      <circle cx="46" cy="46" r="45" fill="#5cb8ff" fillOpacity=".88" />
      <g fill="none" stroke="#fff" strokeWidth="3.500" strokeLinejoin="round" strokeLinecap="round">
        <path d="M36 57 C34 52 27 48 27 38 A19 19 0 0 1 65 38 C65 48 58 52 56 57 V73 Q56 74 55 74 H37 Q36 74 36 73Z" />
        <path d="M36 66 H56M37 45 H57M47 45 V65" />
      </g>
    </svg>
  </section>
);

const InfoTabs = () => (
  <div className="flex h-[53px] items-start overflow-hidden text-[41px] leading-[115px] whitespace-nowrap text-[#666]">
    <span className="ml-[48px] w-[155px]">看点</span>
    <span className="w-[159px]">资讯</span>
    <span className="w-[152px]">盘口</span>
    <span className="w-[156px]">资金</span>
    <span className="w-[132px]">社区</span>
    <span className="bg-gradient-to-r from-[#333] from-85% to-[#bbb] bg-clip-text text-[47px] font-bold text-transparent">简况(F10)</span>
  </div>
);

const actions = [
  {
    name: "下单",
    icon: (
      <>
        <path d="M10 2 H48 Q53 2 53 7 V44 L44 55 H10 Q5 55 5 50 V7 Q5 2 10 2Z" />
        <path d="M11 16 H46M11 23.500 H46M11 31 H46M11 38 H35" />
      </>
    ),
  },
  {
    name: "诊股",
    icon: (
      <>
        <rect x="2" y="11" width="55" height="41" rx="5" />
        <path d="M18 5 H40M29 22 V40M20 31.500 H39M10 54.500 H20M38 54.500 H48" />
      </>
    ),
  },
  {
    name: "删自选",
    icon: (
      <>
        <rect x="6" y="5" width="47" height="47" />
        <path d="M17 28.500 H42" />
      </>
    ),
  },
  {
    name: "功能",
    dot: true,
    icon: (
      <>
        <circle cx="29.500" cy="29" r="24.500" />
        <path d="M19 22 H41M19 36 H41" />
      </>
    ),
  },
];

const BottomBar = () => (
  <footer className="h-[271px] bg-[#252525] whitespace-nowrap text-[#d6d6d6]">
    <div className="flex h-[170px] items-start">
      <div className="flex w-[248px] flex-col items-center text-[35.500px] leading-[48px] text-[#b5b5b5]">
        <svg viewBox="0 0 26 15" className="mt-[11px] h-[15px] w-[26px]" fill="#aaa">
          <path d="M13 0 L26 15 H0Z" />
        </svg>
        <span className="mt-[12px]">军工装备</span>
        <span className="mt-[13px] text-[36px] tracking-[-0.2px] text-[#14f014]">-0.14%</span>
      </div>
      {actions.map(({ name, icon, dot }) => (
        <div key={name} className="relative flex w-[207.500px] flex-col items-center text-[35.500px] leading-[48px]">
          <svg viewBox="0 0 59 58" className="mt-[21px] h-[58px] w-[59px]" fill="none" stroke="#d0d0d0" strokeWidth="3">
            {icon}
          </svg>
          <span className="mt-[4px]">{name}</span>
          {dot && <span className="absolute top-[24px] left-[138px] h-[18px] w-[18px] rounded-full bg-[#ea2f2f]" />}
        </div>
      ))}
    </div>
    <div className="flex items-center pt-[16px] pl-[286px]">
      <svg viewBox="0 0 46 52" className="h-[52px] w-[46px]" fill="none" stroke="#b0b0b0" strokeWidth="4">
        <path d="M42 3 V49 L4 27 Q2 26 4 25Z" strokeLinejoin="round" />
      </svg>
      <svg viewBox="0 0 52 52" className="ml-[182px] h-[52px] w-[52px]" fill="none" stroke="#b0b0b0" strokeWidth="4">
        <circle cx="26" cy="26" r="23" />
      </svg>
      <svg viewBox="0 0 46 52" className="ml-[180px] h-[52px] w-[46px]" fill="none" stroke="#b0b0b0" strokeWidth="4">
        <rect x="3" y="5" width="41" height="42" rx="2" />
      </svg>
    </div>
  </footer>
);

export default function App() {
  return (
    <div className={`h-[2400px] w-[1080px] overflow-hidden bg-white ${FONT}`}>
      <Header />
      <Quote />
      <RangeBar />
      <HkRow />
      <div className="h-3 bg-[#f4f4f4]" />
      <PeriodTabs />
      <AverageRow />
      <PriceChart />
      <VolumeChart />
      <KdjChart />
      <div className="h-3 bg-[#f4f4f4]" />
      <InfoTabs />
      <BottomBar />
    </div>
  );
}
